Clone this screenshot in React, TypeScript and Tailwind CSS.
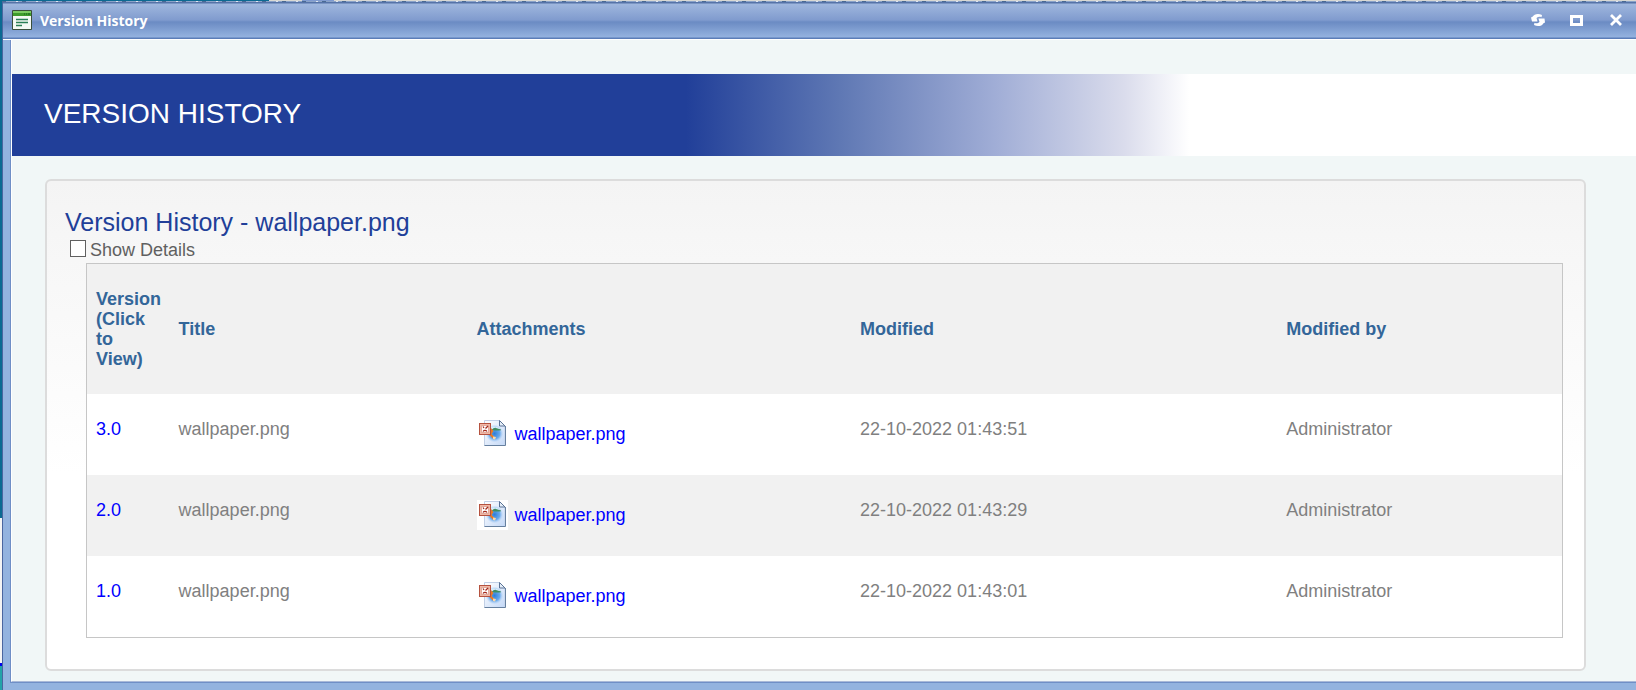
import { useState } from 'react'

const versions = [
  { version: '3.0', title: 'wallpaper.png', modified: '22-10-2022 01:43:51', by: 'Administrator' },
  { version: '2.0', title: 'wallpaper.png', modified: '22-10-2022 01:43:29', by: 'Administrator' },
  { version: '1.0', title: 'wallpaper.png', modified: '22-10-2022 01:43:01', by: 'Administrator' },
]

function FormIcon() {
  return (
    <svg className="h-5 w-5" viewBox="0 0 20 20">
      <rect x="0" y="0" width="20" height="20" rx="1" fill="#3a4f3c" />
      <rect x="1" y="1" width="18" height="5" fill="#3f9c2c" />
      <rect x="1" y="1" width="18" height="2" fill="#7ccb62" />
      <path d="M12 4h1M14 4h1M16 4h2" stroke="#145c1a" />
      <rect x="1" y="6" width="18" height="13" fill="#f4f9f4" />
      <path d="M4 9.5h12M4 12.5h12M4 15.5h6" stroke="#2a7f56" strokeWidth="1.3" />
    </svg>
  )
}

function RefreshIcon() {
  return (
    <svg className="h-3.5 w-3.5" viewBox="0 0 14 14" fill="#fff">
      <path d="M0 4.5L1.5 3.8C3 .8 7.500 0 11 2L10.500 4.200C8.500 3.200 7 3.800 5.500 5L6.500 8.500H1z" />
      <path d="M14 9.500L12.500 10.200C11 13.200 6.500 14 3 12L3.500 9.800C5.500 10.800 7 10.200 8.500 9L7.500 5.500h6z" />
    </svg>
  )
}

function ImageFileIcon() {
  return (
    <svg className="h-[30px] w-[31px] shrink-0 bg-white" viewBox="0 0 31 30">
      <defs>
        <linearGradient id="page" x1="0" y1="0" x2="1" y2="1">
          <stop offset="0" stopColor="#fff" />
          <stop offset="1" stopColor="#c3d8f7" />
        </linearGradient>
        <radialGradient id="lake">
          <stop offset="0" stopColor="#2f7fd8" />
          <stop offset=".6" stopColor="#69a9ec" />
          <stop offset="1" stopColor="#b8d6f7" stopOpacity="0" />
        </radialGradient>
      </defs>
      <path d="M7.5 1.5h15l5.5 5.5v19.5H7.5z" fill="url(#page)" stroke="#c2d0e6" />
      <path d="M28.5 7v19.5H7.5" fill="none" stroke="#66809f" />
      <path d="M22.5 1.5V7H28z" fill="#e6eef8" stroke="#5a7396" />
      <circle cx="17.5" cy="14.5" r="9" fill="url(#lake)" />
      <path d="M12 9c3-2 8-2 11 1H12z" fill="#d6ecfb" />
      <path d="M15 11c1-1.5 2.5-2.5 4-2s3 1 5 1.500v.8c-3 .5-6 .4-9-.3z" fill="#3f8d62" />
      <path d="M14 9l2.500 3-2 3 3 3-1 2-4-4z" fill="#ea7a22" />
      <path d="M16 17.5l3 .5-1 2.5-2-.5z" fill="#fbd9a8" />
      <rect x="2.500" y="4.500" width="11" height="11" fill="#f0b7a6" stroke="#b5523f" />
      <rect x="4.500" y="6.500" width="7" height="7" fill="#fff" stroke="#e3aa9b" />
      <path d="M6 7.500l1 1.500M11 7L8.500 9.500M6 12.500c1-1.500 3-1.500 4 0" stroke="#a32a1c" strokeWidth="1.3" fill="none" />
    </svg>
  )
}

function TitleBar() {
  return (
    <header className="flex h-[38px] shrink-0 items-center border-b border-b-white bg-[linear-gradient(#5573a8_0,#5573a8_1px,#9fb7de_2px,#809bce_18px,#6b8bc3_20px,#94b2df_35px,#5b7db8_36px,#5b7db8_37px)] pr-[13px] pb-px pl-[9px]">
      <FormIcon />
      <h1 className="ml-2 flex-1 font-['Open_Sans',sans-serif] text-[14px] font-bold text-white">Version History</h1>
      <div className="flex items-center gap-[25px]">
        <button aria-label="Refresh" className="flex w-3.5 justify-center">
          <RefreshIcon />
        </button>
        <button aria-label="Maximize" className="flex w-3.5 justify-center">
          <svg className="h-3 w-3.5" viewBox="0 0 14 12">
            <path d="M0 1h13v11H0zM3 4v5h7V4z" fill="#fff" fillRule="evenodd" />
          </svg>
        </button>
        <button aria-label="Close" className="flex w-3.5 justify-center">
          <svg className="h-3 w-3" viewBox="0 0 12 12" stroke="#fff" strokeWidth="2.8">
            <path d="M1 1l10 10M11 1L1 11" />
          </svg>
        </button>
      </div>
    </header>
  )
}

function VersionTable() {
  return (
    <table className="w-full table-fixed border-separate border-spacing-0 border border-[#c6c6c6] text-left text-[18px] leading-5">
      <thead className="bg-[#f1f1f1] text-[#336699]">
        <tr>
          <th className="w-[5.6%] py-[25px] pr-2 pl-[9px]">Version (Click to View)</th>
          <th className="w-[20.2%] px-[9px]">Title</th>
          <th className="w-[26%] px-[9px]">Attachments</th>
          <th className="w-[28.9%] px-[9px]">Modified</th>
          <th className="px-[9px]">Modified by</th>
        </tr>
      </thead>
      <tbody className="text-[#808080]">
        {versions.map((v) => (
          <tr key={v.version} className="bg-white align-top even:bg-[#f1f1f1]">
            <td className="px-[9px] py-[25px]">
              <a href="#" className="text-[#0000ff]">{v.version}</a>
            </td>
            <td className="px-[9px] py-[25px]">{v.title}</td>
            <td className="px-[9px] pt-[25px] pb-[26px]">
              <a href="#" className="flex items-center gap-[7px] text-[#0000ff]">
                <ImageFileIcon />
                {v.title}
              </a>
            </td>
            <td className="px-[9px] py-[25px]">{v.modified}</td>
            <td className="px-[9px] py-[25px]">{v.by}</td>
          </tr>
        ))}
      </tbody>
    </table>
  )
}

export default function App() {
  const [showDetails, setShowDetails] = useState(false)

  return (
    <div className="flex min-h-screen flex-col bg-[linear-gradient(#0b6a92_518px,#f4f4f4_518px,#f4f4f4_663px,#0000ee_663px,#0000ee_666px,#23a3a8_666px)] pl-0.5 font-['Liberation_Sans',Arial,sans-serif]">
      {/* sliver of the desktop above the window */}
      <div className="h-px bg-[linear-gradient(90deg,#0b6a92_267px,#d9d9d4_267px,#d9d9d4_300px,#7f9bd0_300px,#7f9bd0_332px,#d9d9d4_332px)]" />
      <div className="h-px bg-[repeating-linear-gradient(90deg,#4a6a94_0,#4a6a94_4px,#8ba3c8_4px,#8ba3c8_14px,#dfe6f0_14px,#dfe6f0_16px,#8ba3c8_16px,#8ba3c8_20px)]" />
      <div className="flex flex-1 flex-col border-l border-[#4a66a0] bg-[#93b3df]">
        <TitleBar />
        <div className="flex flex-1 flex-col pb-[7px] pl-[7px]">
          <div className="flex flex-1 flex-col border-b border-l border-[#6f8fc6]">
            <main className="flex-1 border-b border-l border-b-[#a9b9d8] border-l-white bg-[#f1f7f7] pt-[34px] pb-[9px]">
              <div className="flex h-[82px] items-center bg-white bg-[linear-gradient(90deg,#213f99_41.5%,#5f78b4_51%,#a0add6_60.5%,#dadcec_68.5%,#fff_72.5%)] pb-0.5 pl-8">
                <h2 className="text-[28px] text-white">VERSION HISTORY</h2>
              </div>
              <section className="mt-[23px] mr-[50px] ml-[33px] rounded-md border-2 border-[#dcdcdc] bg-[linear-gradient(#f4f4f4,#fff_60%)] pt-[25px] pr-[21px] pb-[31px] pl-[18px]">
                <h3 className="text-[25px] leading-8 text-[#213f99]">Version History - wallpaper.png</h3>
                <label className="ml-[5px] flex items-start gap-1 text-[18px] leading-[25px] text-[#606060]">
                  <input
                    type="checkbox"
                    checked={showDetails}
                    onChange={(e) => setShowDetails(e.target.checked)}
                    className="mt-0.5 h-[17px] w-4 appearance-none border border-[#606060] bg-white checked:bg-[#336699]"
                  />
                  Show Details
                </label>
                <div className="pl-[21px]">
                  <VersionTable />
                </div>
              </section>
            </main>
          </div>
        </div>
      </div>
    </div>
  )
}
